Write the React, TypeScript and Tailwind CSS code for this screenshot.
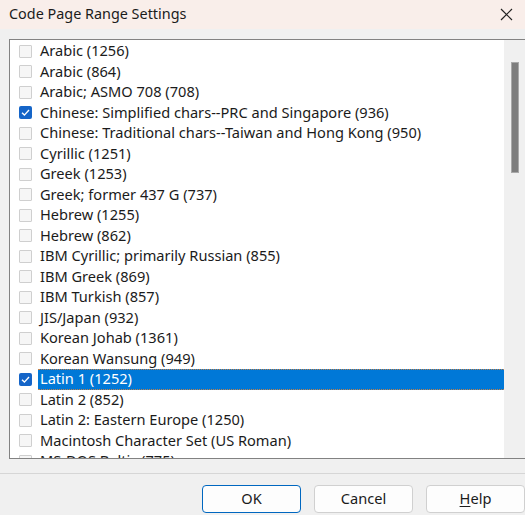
import React from "react";

const items: { label: string; checked?: boolean; selected?: boolean }[] = [
  { label: "Arabic (1256)" },
  { label: "Arabic (864)" },
  { label: "Arabic; ASMO 708 (708)" },
  { label: "Chinese: Simplified chars--PRC and Singapore (936)", checked: true },
  { label: "Chinese: Traditional chars--Taiwan and Hong Kong (950)" },
  { label: "Cyrillic (1251)" },
  { label: "Greek (1253)" },
  { label: "Greek; former 437 G (737)" },
  { label: "Hebrew (1255)" },
  { label: "Hebrew (862)" },
  { label: "IBM Cyrillic; primarily Russian (855)" },
  { label: "IBM Greek (869)" },
  { label: "IBM Turkish (857)" },
  { label: "JIS/Japan (932)" },
  { label: "Korean Johab (1361)" },
  { label: "Korean Wansung (949)" },
  { label: "Latin 1 (1252)", checked: true, selected: true },
  { label: "Latin 2 (852)" },
  { label: "Latin 2: Eastern Europe (1250)" },
  { label: "Macintosh Character Set (US Roman)" },
  { label: "MS-DOS Baltic (775)" },
];

function Check({ checked }: { checked?: boolean }) {
  if (checked) {
    return (
      <div className="w-[13px] h-[13px] shrink-0 bg-[#1565c8] rounded-[2px] flex items-center justify-center">
        <svg width="11" height="11" viewBox="0 0 11 11">
          <path d="M2 5.8 L4.4 8.1 L9 3" stroke="white" strokeWidth="1.4" fill="none" />
        </svg>
      </div>
    );
  }
  return <div className="w-[13px] h-[13px] shrink-0 border border-[#cfcfcf] bg-[#f6f6f6] rounded-[1px]" />;
}

export default function App() {
  return (
    <div
      className="w-[525px] h-[515px] overflow-hidden bg-[#f0f0f0] flex flex-col text-[#1b1b1b]"
      style={{ fontFamily: '"Noto Sans", "Open Sans", sans-serif' }}
    >
      <div className="h-[29px] shrink-0 bg-[#f9eeea] flex items-center justify-between pl-[9px] pr-[12px]">
        <span className="text-[14.4px] leading-none">Code Page Range Settings</span>
        <svg width="13" height="13" viewBox="0 0 13 13">
          <path d="M1 1 L12 12 M12 1 L1 12" stroke="#222" strokeWidth="1.2" />
        </svg>
      </div>
      <div className="h-[10px] shrink-0" />
      <div className="ml-[9px] w-[540px] h-[420px] shrink-0 border border-[#828282] bg-white flex overflow-hidden">
        <div className="w-[494px] shrink-0 pt-[1px] flex flex-col overflow-hidden">
          {items.map((it) => (
            <div key={it.label} className="h-[20.5px] shrink-0 flex items-center pl-[9px]">
              <Check checked={it.checked} />
              {it.selected ? (
                <div className="ml-[6px] flex-1 h-[21px] bg-[#0078d7] text-white border-y border-[#c0804a] border-dotted flex items-center pl-[2px] text-[14.6px] whitespace-nowrap">
                  {it.label}
                </div>
              ) : (
                <span className="ml-[8px] text-[14.6px] whitespace-nowrap">{it.label}</span>
              )}
            </div>
          ))}
        </div>
        <div className="w-[21px] shrink-0 bg-[#f0f0f0] pt-[22px] pl-[7px]">
          <div className="w-[8px] h-[111px] bg-[#7d7d7d] border border-[#a8a8a8]" />
        </div>
      </div>
      <div className="h-[14px] shrink-0" />
      <div className="h-[1px] shrink-0 bg-[#d6d6d6]" />
      <div className="flex pl-[202px] pt-[11px] gap-[13px] text-[14.6px]">
        <button className="w-[100px] h-[28px] rounded-[4px] border border-[#0067c0] bg-[#fdfdfd]">OK</button>
        <button className="w-[100px] h-[28px] rounded-[4px] border border-[#d0d0d0] bg-[#fdfdfd]">Cancel</button>
        <button className="w-[100px] h-[28px] rounded-[4px] border border-[#d0d0d0] bg-[#fdfdfd]">
          <span className="underline underline-offset-2">H</span>elp
        </button>
      </div>
    </div>
  );
}
